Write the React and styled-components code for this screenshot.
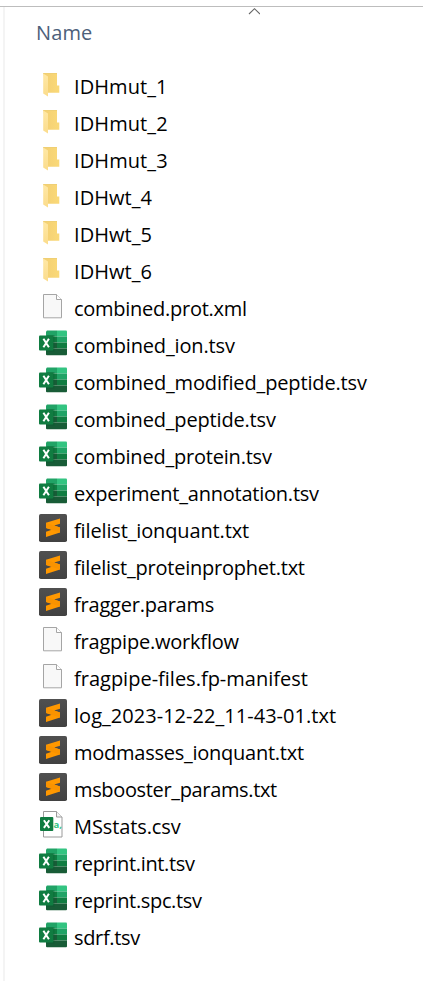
import React from "react";
import styled, { createGlobalStyle } from "styled-components";

const GlobalStyle = createGlobalStyle`
  *, *::before, *::after { box-sizing: border-box; }
  body { margin: 0; background: #fff; }
`;

const Pane = styled.main`
  height: 981px;
  padding-top: 6px;
  overflow: hidden;
  background: #fff;
  color: #000;
  font-family: "Open Sans", "Segoe UI", sans-serif;
  font-size: 20px;
`;

const Listing = styled.div`
  height: 975px;
  border-top: 1px solid #bdbdbd;
  display: grid;
  grid-template-columns: 5px 1fr;
`;

const Divider = styled.div`
  border-right: 2px solid #f4f4f4;
`;

const Column = styled.section`
  display: flex;
  flex-direction: column;
`;

const Header = styled.header`
  height: 61px;
  flex: none;
  display: grid;
  grid-template-rows: 9px 34px;
`;

const SortArrow = styled.svg`
  display: block;
  width: 12px;
  height: 9px;
  margin-left: 243px;
`;

const HeaderLabel = styled.span`
  padding-left: 31px;
  line-height: 34px;
  letter-spacing: 0.12px;
  color: #4c607a;
`;

const FileList = styled.ul`
  list-style: none;
  margin: 0;
  padding: 0 0 0 33px;
`;

const FileRow = styled.li`
  height: 37px;
  display: flex;
  gap: 6px;
`;

const IconBox = styled.svg`
  display: block;
  flex: none;
  width: 30px;
  height: 37px;
`;

const FileName = styled.span`
  line-height: 37px;
  white-space: nowrap;
  letter-spacing: ${(p) => p.$tracking}px;
`;

const Mark = styled.text`
  font-family: "Open Sans", sans-serif;
  font-weight: 700;
  font-size: ${(p) => p.$size}px;
  fill: ${(p) => p.$fill};
`;

function FolderIcon() {
  return (
    <IconBox viewBox="0 0 30 37">
      <path d="M5.2 5H19v12.6h2.3v7.1H9z" fill="url(#folderBack)" />
      <path d="M5.2 5H19v1H5.2z" fill="#efcf74" />
      <path d="M5.2 5.4 10 8.6V28.6L5.2 25.4z" fill="url(#folderFlap)" />
    </IconBox>
  );
}

function DocIcon() {
  return (
    <IconBox viewBox="0 0 30 37">
      <path d="M5.5 4.5h13l5 5v18.3h-18z" fill="#f8f8f8" stroke="#a5a5a5" />
      <path d="M18.5 4.5v5h5" fill="#fff" stroke="#a5a5a5" />
    </IconBox>
  );
}

function ExcelIcon() {
  return (
    <IconBox viewBox="0 0 30 37">
      <path d="M9 3.5h10v6H8V4.5z" fill="#21a366" />
      <path d="M19 3.5h9q1 0 1 1v5H19z" fill="#33c481" />
      <path d="M8 9.5h11v6H8z" fill="#107c41" />
      <path d="M19 9.5h10v6H19z" fill="#21a366" />
      <path d="M8 15.5h11v6H8z" fill="#185c37" />
      <path d="M19 15.5h10v6H19z" fill="#107c41" />
      <path d="M8 21.5h21v5.7q0 1-1 1H9q-1 0-1-1z" fill="#185c37" />
      <path d="M9 8h7.5v17H8v-1z" fill="#0b5930" opacity=".4" />
      <rect x="1" y="8.5" width="14.3" height="15" rx="1" fill="#107c41" />
      <path d="M5.4 11.8 10.9 20.2M10.9 11.8 5.4 20.2" stroke="#fff" strokeWidth="2" />
    </IconBox>
  );
}

function SublimeIcon() {
  return (
    <IconBox viewBox="0 0 30 37">
      <rect x="1" y="2" width="28" height="28" rx="1.8" fill="url(#sublimeBase)" />
      <path
        d="M22 6.5 8 10.8v5.3l5.7 1.7L8 19.7V25l14-4.4v-5.2l-5.8-1.8L22 11.7z"
        fill="#ff9800"
      />
      <path d="M8 10.8v5.3l14 4.5v-5.2z" fill="#f99300" />
    </IconBox>
  );
}

function CsvIcon() {
  return (
    <IconBox viewBox="0 0 30 37">
      <path d="M5.5 3.5h13l5.5 5.5V29h-18.5z" fill="#fff" stroke="#9b9b9b" />
      <path d="M18.5 3.5v5.5h5.5" fill="#f3f3f3" stroke="#9b9b9b" />
      <Mark x="15.6" y="20" $size={9.5} $fill="#33c481">a,</Mark>
      <rect x="2" y="9" width="13.3" height="14" rx="1" fill="#107c41" />
      <path d="M5.9 12.2 11.3 19.9M11.3 12.2 5.9 19.9" stroke="#fff" strokeWidth="2" />
    </IconBox>
  );
}

function IconPaints() {
  return (
    <defs>
      <linearGradient id="folderBack" x1="0" x2="1" y1="0" y2="0">
        <stop offset="0" stopColor="#f3cf73" />
        <stop offset="1" stopColor="#fad978" />
      </linearGradient>
      <linearGradient id="folderFlap" x1="0" x2="0" y1="0" y2="1">
        <stop offset="0" stopColor="#ffe8a5" />
        <stop offset="1" stopColor="#fbdc8c" />
      </linearGradient>
      <linearGradient id="sublimeBase" x1="0" x2="0" y1="0" y2="1">
        <stop offset="0" stopColor="#505050" />
        <stop offset="1" stopColor="#414141" />
      </linearGradient>
    </defs>
  );
}

const icons = {
  folder: FolderIcon,
  doc: DocIcon,
  excel: ExcelIcon,
  sublime: SublimeIcon,
  csv: CsvIcon,
};

const files = [
  ["folder", "IDHmut_1", 0.07],
  ["folder", "IDHmut_2", 0.1],
  ["folder", "IDHmut_3", 0.1],
  ["folder", "IDHwt_4", 0.05],
  ["folder", "IDHwt_5", 0.05],
  ["folder", "IDHwt_6", 0.05],
  ["doc", "combined.prot.xml", -0.26],
  ["excel", "combined_ion.tsv", -0.15],
  ["excel", "combined_modified_peptide.tsv", -0.145],
  ["excel", "combined_peptide.tsv", -0.17],
  ["excel", "combined_protein.tsv", -0.21],
  ["excel", "experiment_annotation.tsv", -0.23],
  ["sublime", "filelist_ionquant.txt", -0.14],
  ["sublime", "filelist_proteinprophet.txt", -0.23],
  ["sublime", "fragger.params", -0.21],
  ["doc", "fragpipe.workflow", -0.21],
  ["doc", "fragpipe-files.fp-manifest", 0],
  ["sublime", "log_2023-12-22_11-43-01.txt", 0.03],
  ["sublime", "modmasses_ionquant.txt", -0.25],
  ["sublime", "msbooster_params.txt", -0.35],
  ["csv", "MSstats.csv", -0.1],
  ["excel", "reprint.int.tsv", -0.35],
  ["excel", "reprint.spc.tsv", -0.34],
  ["excel", "sdrf.tsv", -0.33],
];

export default function App() {
  return (
    <Pane>
      <GlobalStyle />
      <Listing>
        <Divider />
        <Column>
          <Header>
            <SortArrow viewBox="0 0 12 9">
              <IconPaints />
              <path d="M1 7 6.5 1.7 12 7" fill="none" stroke="#666" strokeWidth="1.1" />
            </SortArrow>
            <HeaderLabel>Name</HeaderLabel>
          </Header>
          <FileList>
            {files.map(([kind, name, tracking]) => {
              const Icon = icons[kind];
              return (
                <FileRow key={name}>
                  <Icon />
                  <FileName $tracking={tracking}>{name}</FileName>
                </FileRow>
              );
            })}
          </FileList>
        </Column>
      </Listing>
    </Pane>
  );
}
